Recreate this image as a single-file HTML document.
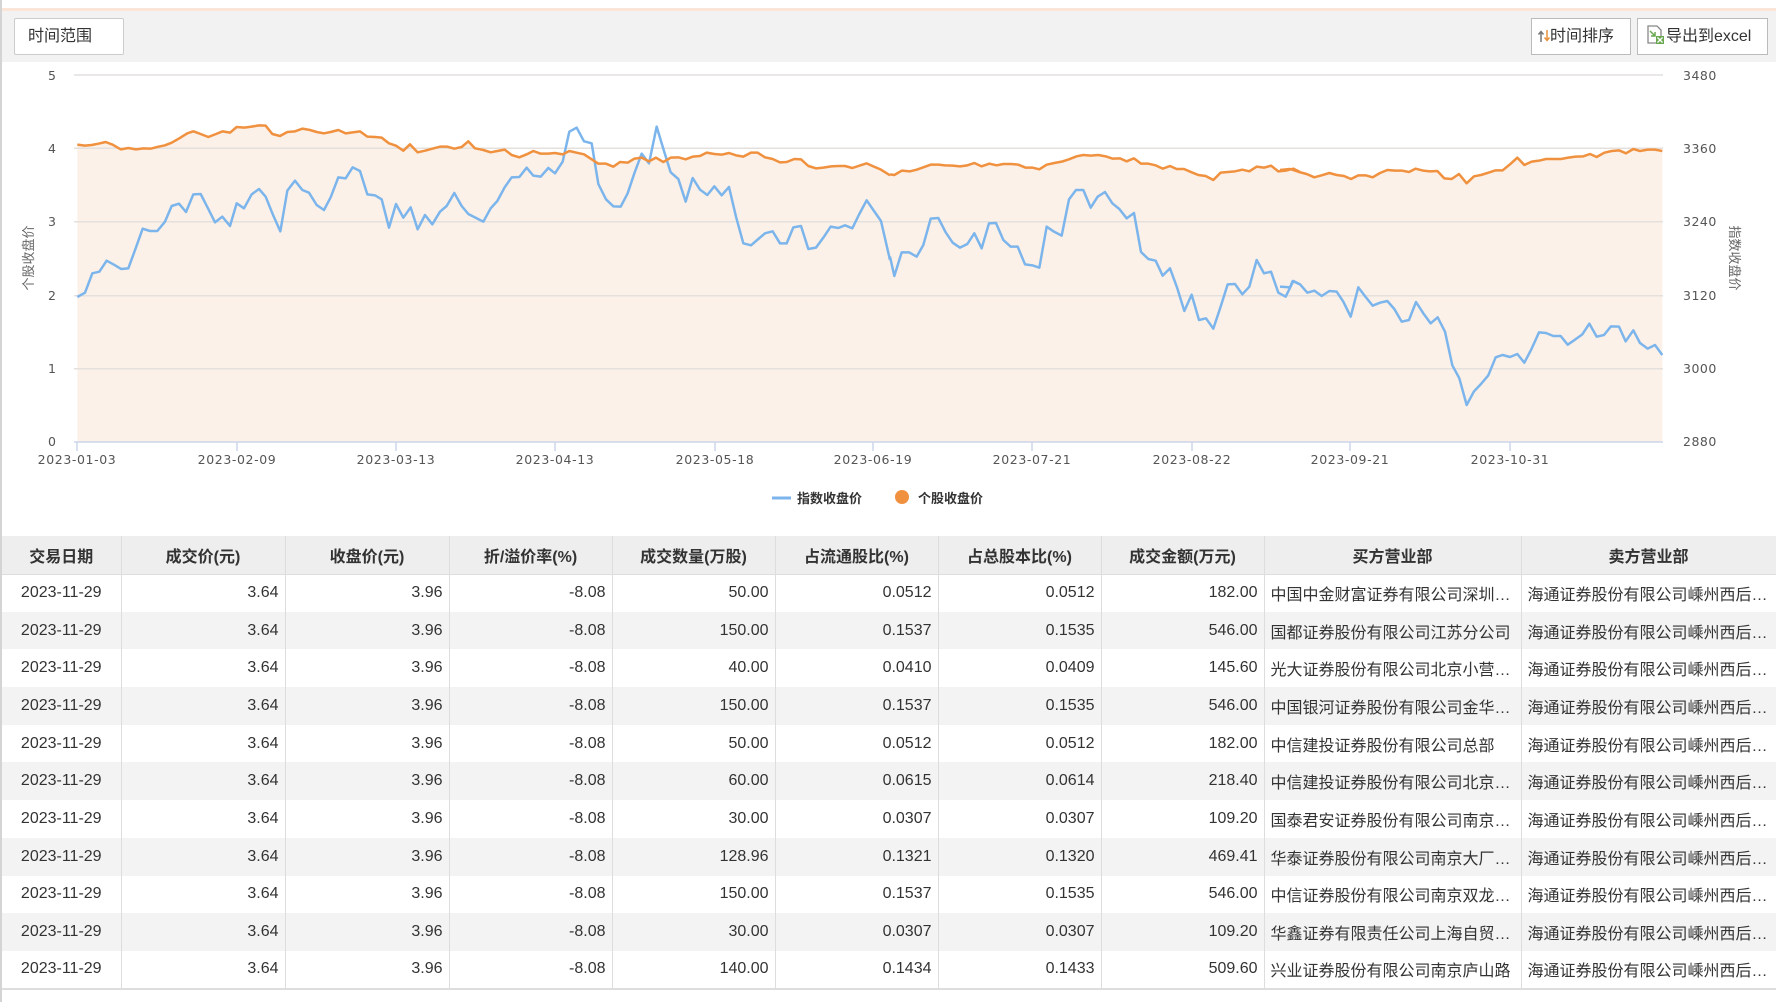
<!DOCTYPE html>
<html><head><meta charset="utf-8">
<style>
*{margin:0;padding:0;box-sizing:border-box}
body{width:1776px;height:1002px;overflow:hidden;background:#fff;font-family:"Liberation Sans","Noto Sans CJK SC",sans-serif;color:#333;position:relative}
.topline{position:absolute;left:0;top:8px;width:1776px;height:3px;background:#fbe5d6}
.toolbar{position:absolute;left:0;top:11px;width:1776px;height:51px;background:#f2f2f2}
.lb{position:absolute;left:0;top:0;width:2px;height:1002px;background:#d4d4d4}
.btn{position:absolute;top:18px;height:37px;background:#fff;border:1px solid #bbb;font-size:16px;line-height:35px;color:#333;white-space:nowrap}
table{position:absolute;left:2px;top:536px;width:1774px;border-collapse:collapse;table-layout:fixed;font-size:16px;font-family:"Liberation Sans Narrow","Liberation Sans","Noto Sans CJK SC",sans-serif}
th{height:38px;background:#eee;font-weight:bold;color:#333;border-right:1px solid #ddd;border-bottom:1px solid #ddd;text-align:center;overflow:hidden;white-space:nowrap}
td{height:37.7px;border-right:1px solid #ddd;padding:0 6px;white-space:nowrap;overflow:hidden;text-overflow:ellipsis;text-align:right}
tr:nth-child(even) td{background:#f3f3f3}
td.c{text-align:center}td.l{text-align:left}
tbody tr:last-child td{border-bottom:2px solid #ddd}
</style></head><body>
<div class="topline"></div>
<div class="toolbar"></div>
<div class="lb"></div>
<div class="btn" style="left:14px;width:110px;padding-left:13px;border-color:#ccc;border-radius:2px">时间范围</div>
<div class="btn" style="left:1531px;width:100px;padding-left:6px"><svg width="12" height="14" viewBox="0 0 12 14" style="vertical-align:-2px"><path d="M3 13V3M0.5 5.5L3 2.5L5.5 5.5" stroke="#777" stroke-width="1.5" fill="none"/><path d="M9 1v10M6.5 8.5L9 11.5L11.5 8.5" stroke="#e8913d" stroke-width="1.5" fill="none"/></svg>时间排序</div>
<div class="btn" style="left:1637px;width:131px;padding-left:8px">
<svg width="20" height="20" viewBox="0 0 20 20" style="vertical-align:-4px"><path d="M2 1h9l4 4v13H2z" fill="#fff" stroke="#888" stroke-width="1.3"/><path d="M4 6l5 5M9 7v4H5" stroke="#6aa84f" stroke-width="1.5" fill="none"/><rect x="10" y="11" width="8" height="8" fill="#6aa84f"/><path d="M11.5 12.5l5 5M16.5 12.5l-5 5" stroke="#fff" stroke-width="1.3"/></svg>导出到excel</div>

<svg style="position:absolute;left:0;top:0" width="1776" height="536" font-family="DejaVu Sans, sans-serif">
<g fill="#fcf1e8">
<g transform="translate(60,100) scale(0.33333)"><polygon points="52,1026 52,134 75,137 95,135 115,131 137,126 158,134 182,148 205,144 228,148 250,145 272,146 295,140 315,136 335,128 358,115 382,100 400,94 422,102 445,111 468,102 488,94 510,98 530,81 553,83 575,80 597,76 617,77 637,102 660,108 682,96 705,94 727,86 750,90 770,96 792,100 812,96 835,90 857,100 878,97 900,94 922,110 945,111 965,113 987,130 1008,137 1030,152 1050,133 1073,157 1095,152 1117,146 1140,140 1162,140 1183,146 1205,141 1225,124 1245,145 1260,148 1260,1026"/></g>
<g transform="translate(470,100) scale(0.33333)"><polygon points="0,1026 0,125 20,145 40,150 62,157 82,153 104,149 125,165 148,172 170,163 190,153 212,161 235,161 255,159 278,163 298,153 320,158 342,163 365,178 385,191 408,191 430,200 450,186 473,188 493,176 515,173 537,184 558,173 580,186 602,173 625,172 647,178 668,170 690,168 710,158 733,162 755,164 777,159 798,166 820,170 843,158 863,158 885,172 908,177 930,187 950,186 973,177 993,178 1015,198 1038,205 1060,203 1083,199 1105,198 1125,198 1147,204 1168,197 1190,190 1210,199 1233,209 1260,226 1260,1026"/></g>
<g transform="translate(880,100) scale(0.33333)"><polygon points="0,1026 0,205 22,222 43,225 65,212 90,214 110,209 130,202 152,194 175,194 195,196 218,197 240,199 262,196 283,189 305,199 328,191 350,196 370,192 393,192 415,194 437,203 458,203 478,208 500,194 523,189 545,185 567,178 590,169 610,165 632,167 655,165 677,169 698,176 720,175 740,184 762,175 783,191 805,191 827,196 848,206 870,198 890,207 912,207 935,217 955,225 977,228 1000,240 1022,218 1043,216 1065,214 1087,209 1108,214 1130,200 1152,203 1173,197 1195,214 1217,212 1240,206 1260,216 1260,1026"/></g>
<g transform="translate(1290,100) scale(0.33333)"><polygon points="0,1026 0,207 27,216 50,222 73,232 95,226 118,219 140,225 162,228 183,237 205,226 227,226 248,232 270,219 292,210 315,212 337,212 357,216 377,206 400,212 420,214 442,213 463,235 485,237 507,222 530,250 552,229 573,225 595,218 617,211 638,211 660,193 682,173 703,195 725,185 747,182 768,177 790,177 813,177 835,173 857,170 880,169 900,162 920,171 943,158 965,153 987,151 1008,160 1030,147 1050,153 1073,149 1095,149 1117,153 1117,1026"/></g>
</g>
<g stroke="#e3e0dd" stroke-width="1.5">
<line x1="74" y1="75" x2="1663" y2="75"/><line x1="74" y1="148.3" x2="1663" y2="148.3"/><line x1="74" y1="221.7" x2="1663" y2="221.7"/><line x1="74" y1="295.7" x2="1663" y2="295.7"/><line x1="74" y1="368.7" x2="1663" y2="368.7"/>
</g>
<g stroke="#ccd6eb" stroke-width="1.5"><line x1="74" y1="442" x2="1663" y2="442"/>
<line x1="77" y1="442" x2="77" y2="451"/><line x1="237" y1="442" x2="237" y2="451"/><line x1="396" y1="442" x2="396" y2="451"/><line x1="555" y1="442" x2="555" y2="451"/><line x1="715" y1="442" x2="715" y2="451"/><line x1="873" y1="442" x2="873" y2="451"/><line x1="1032" y1="442" x2="1032" y2="451"/><line x1="1192" y1="442" x2="1192" y2="451"/><line x1="1350" y1="442" x2="1350" y2="451"/><line x1="1510" y1="442" x2="1510" y2="451"/></g>
<g fill="none" stroke="#7cb5ec" stroke-width="7.5" stroke-linejoin="round">
<polyline transform="translate(60,100) scale(0.33333)" points="52,591 75,578 97,520 118,515 140,482 162,494 183,507 205,505 227,445 248,386 270,393 292,393 315,365 335,318 357,311 378,336 400,283 422,282 443,323 465,367 487,350 510,378 530,310 552,325 575,283 597,267 617,290 640,347 661,394 682,272 705,242 727,270 747,278 770,315 792,330 812,292 835,232 857,235 878,202 900,213 922,283 945,286 965,298 987,383 1008,312 1030,353 1052,322 1073,388 1095,345 1117,373 1140,335 1160,318 1183,279 1205,318 1225,342 1260,360"/>
<polyline transform="translate(470,100) scale(0.33333)" points="30,360 40,365 62,325 82,303 104,262 125,232 148,231 170,203 190,227 212,230 235,204 255,220 278,185 298,95 320,83 342,124 365,130 385,252 408,298 430,319 452,320 473,280 493,220 515,161 537,190 560,80 582,153 602,217 625,237 647,305 668,234 690,269 712,285 733,259 755,286 777,261 798,350 820,430 843,436 865,417 885,400 908,394 930,430 950,430 970,382 993,378 1015,447 1038,443 1060,413 1082,380 1105,384 1125,376 1147,385 1168,342 1190,301 1212,333 1233,363 1260,480"/>
<polyline transform="translate(880,100) scale(0.33333)" points="30,470 43,528 65,457 87,457 110,470 130,435 152,356 175,354 197,397 218,428 240,443 262,432 283,400 305,445 327,370 348,369 370,420 392,440 413,440 435,493 457,496 478,503 500,380 522,395 545,407 567,298 588,270 610,270 632,323 653,290 675,276 697,310 718,327 740,355 762,339 783,456 805,477 827,482 848,527 870,505 892,565 913,633 935,584 957,660 978,655 1000,686 1022,620 1043,553 1065,552 1087,583 1108,560 1130,480 1152,520 1173,515 1195,578 1217,590 1240,543 1260,553"/>
<polyline transform="translate(1290,100) scale(0.33333)" points="-30,560 0,562 8,543 30,553 52,578 73,572 95,588 118,573 140,575 160,605 182,650 205,562 227,591 248,617 270,608 292,603 313,627 335,665 357,660 378,606 400,640 422,670 443,652 465,695 487,796 508,835 530,915 552,874 573,852 595,826 617,772 638,765 660,771 682,762 703,788 725,746 747,697 768,699 790,708 812,708 833,734 855,719 877,703 898,671 920,710 942,705 963,679 987,680 1007,724 1030,691 1050,729 1073,746 1095,735 1117,765"/>
</g>
<g fill="none" stroke="#f0913f" stroke-width="7.5" stroke-linejoin="round">
<polyline transform="translate(60,100) scale(0.33333)" points="52,134 75,137 95,135 115,131 137,126 158,134 182,148 205,144 228,148 250,145 272,146 295,140 315,136 335,128 358,115 382,100 400,94 422,102 445,111 468,102 488,94 510,98 530,81 553,83 575,80 597,76 617,77 637,102 660,108 682,96 705,94 727,86 750,90 770,96 792,100 812,96 835,90 857,100 878,97 900,94 922,110 945,111 965,113 987,130 1008,137 1030,152 1050,133 1073,157 1095,152 1117,146 1140,140 1162,140 1183,146 1205,141 1225,124 1245,145 1260,148"/>
<polyline transform="translate(470,100) scale(0.33333)" points="30,148 40,150 62,157 82,153 104,149 125,165 148,172 170,163 190,153 212,161 235,161 255,159 278,163 298,153 320,158 342,163 365,178 385,191 408,191 430,200 450,186 473,188 493,176 515,173 537,184 558,173 580,186 602,173 625,172 647,178 668,170 690,168 710,158 733,162 755,164 777,159 798,166 820,170 843,158 863,158 885,172 908,177 930,187 950,186 973,177 993,178 1015,198 1038,205 1060,203 1083,199 1105,198 1125,198 1147,204 1168,197 1190,190 1210,199 1233,209 1260,226"/>
<polyline transform="translate(880,100) scale(0.33333)" points="30,223 43,225 65,212 90,214 110,209 130,202 152,194 175,194 195,196 218,197 240,199 262,196 283,189 305,199 328,191 350,196 370,192 393,192 415,194 437,203 458,203 478,208 500,194 523,189 545,185 567,178 590,169 610,165 632,167 655,165 677,169 698,176 720,175 740,184 762,175 783,191 805,191 827,196 848,206 870,198 890,207 912,207 935,217 955,225 977,228 1000,240 1022,218 1043,216 1065,214 1087,209 1108,214 1130,200 1152,203 1173,197 1195,214 1217,212 1240,206 1260,216"/>
<polyline transform="translate(1290,100) scale(0.33333)" points="-30,210 0,207 27,216 50,222 73,232 95,226 118,219 140,225 162,228 183,237 205,226 227,226 248,232 270,219 292,210 315,212 337,212 357,216 377,206 400,212 420,214 442,213 463,235 485,237 507,222 530,250 552,229 573,225 595,218 617,211 638,211 660,193 682,173 703,195 725,185 747,182 768,177 790,177 813,177 835,173 857,170 880,169 900,162 920,171 943,158 965,153 987,151 1008,160 1030,147 1050,153 1073,149 1095,149 1117,153"/>
</g>
<g font-size="12.5" fill="#555" text-anchor="end">
<text x="56" y="80">5</text><text x="56" y="153">4</text><text x="56" y="226">3</text><text x="56" y="300">2</text><text x="56" y="373">1</text><text x="56" y="446">0</text>
</g>
<g font-size="12.5" fill="#555" letter-spacing="0.5">
<text x="1683" y="80">3480</text><text x="1683" y="153">3360</text><text x="1683" y="226">3240</text><text x="1683" y="300">3120</text><text x="1683" y="373">3000</text><text x="1683" y="446">2880</text>
</g>
<g font-size="12.5" fill="#555" text-anchor="middle" letter-spacing="0.6">
<text x="77" y="464">2023-01-03</text><text x="237" y="464">2023-02-09</text><text x="396" y="464">2023-03-13</text><text x="555" y="464">2023-04-13</text><text x="715" y="464">2023-05-18</text><text x="873" y="464">2023-06-19</text><text x="1032" y="464">2023-07-21</text><text x="1192" y="464">2023-08-22</text><text x="1350" y="464">2023-09-21</text><text x="1510" y="464">2023-10-31</text>
</g>
<text transform="translate(33,258) rotate(-90)" font-size="13" fill="#666" text-anchor="middle" font-family="Noto Sans CJK SC, sans-serif">个股收盘价</text>
<text transform="translate(1730,258) rotate(90)" font-size="13" fill="#666" text-anchor="middle" font-family="Noto Sans CJK SC, sans-serif">指数收盘价</text>
<line x1="772" y1="498" x2="791" y2="498" stroke="#7cb5ec" stroke-width="3"/>
<text x="797" y="503" font-size="13" font-weight="bold" fill="#333" font-family="Noto Sans CJK SC, sans-serif">指数收盘价</text>
<circle cx="902" cy="497" r="7" fill="#f0913f"/>
<text x="918" y="503" font-size="13" font-weight="bold" fill="#333" font-family="Noto Sans CJK SC, sans-serif">个股收盘价</text>
</svg>

<table>
<colgroup><col style="width:119px"><col style="width:164px"><col style="width:164px"><col style="width:163px"><col style="width:163px"><col style="width:163px"><col style="width:163px"><col style="width:163px"><col style="width:257px"><col style="width:255px"></colgroup>
<thead><tr><th>交易日期</th><th>成交价(元)</th><th>收盘价(元)</th><th>折/溢价率(%)</th><th>成交数量(万股)</th><th>占流通股比(%)</th><th>占总股本比(%)</th><th>成交金额(万元)</th><th>买方营业部</th><th>卖方营业部</th></tr></thead>
<tbody>
<tr><td class="c">2023-11-29</td><td>3.64</td><td>3.96</td><td>-8.08</td><td>50.00</td><td>0.0512</td><td>0.0512</td><td>182.00</td><td class="l">中国中金财富证券有限公司深圳分公司</td><td class="l">海通证券股份有限公司嵊州西后街证券营业部</td></tr>
<tr><td class="c">2023-11-29</td><td>3.64</td><td>3.96</td><td>-8.08</td><td>150.00</td><td>0.1537</td><td>0.1535</td><td>546.00</td><td class="l">国都证券股份有限公司江苏分公司</td><td class="l">海通证券股份有限公司嵊州西后街证券营业部</td></tr>
<tr><td class="c">2023-11-29</td><td>3.64</td><td>3.96</td><td>-8.08</td><td>40.00</td><td>0.0410</td><td>0.0409</td><td>145.60</td><td class="l">光大证券股份有限公司北京小营证券</td><td class="l">海通证券股份有限公司嵊州西后街证券营业部</td></tr>
<tr><td class="c">2023-11-29</td><td>3.64</td><td>3.96</td><td>-8.08</td><td>150.00</td><td>0.1537</td><td>0.1535</td><td>546.00</td><td class="l">中国银河证券股份有限公司金华分公司</td><td class="l">海通证券股份有限公司嵊州西后街证券营业部</td></tr>
<tr><td class="c">2023-11-29</td><td>3.64</td><td>3.96</td><td>-8.08</td><td>50.00</td><td>0.0512</td><td>0.0512</td><td>182.00</td><td class="l">中信建投证券股份有限公司总部</td><td class="l">海通证券股份有限公司嵊州西后街证券营业部</td></tr>
<tr><td class="c">2023-11-29</td><td>3.64</td><td>3.96</td><td>-8.08</td><td>60.00</td><td>0.0615</td><td>0.0614</td><td>218.40</td><td class="l">中信建投证券股份有限公司北京分公司</td><td class="l">海通证券股份有限公司嵊州西后街证券营业部</td></tr>
<tr><td class="c">2023-11-29</td><td>3.64</td><td>3.96</td><td>-8.08</td><td>30.00</td><td>0.0307</td><td>0.0307</td><td>109.20</td><td class="l">国泰君安证券股份有限公司南京证券</td><td class="l">海通证券股份有限公司嵊州西后街证券营业部</td></tr>
<tr><td class="c">2023-11-29</td><td>3.64</td><td>3.96</td><td>-8.08</td><td>128.96</td><td>0.1321</td><td>0.1320</td><td>469.41</td><td class="l">华泰证券股份有限公司南京大厂证券</td><td class="l">海通证券股份有限公司嵊州西后街证券营业部</td></tr>
<tr><td class="c">2023-11-29</td><td>3.64</td><td>3.96</td><td>-8.08</td><td>150.00</td><td>0.1537</td><td>0.1535</td><td>546.00</td><td class="l">中信证券股份有限公司南京双龙大道</td><td class="l">海通证券股份有限公司嵊州西后街证券营业部</td></tr>
<tr><td class="c">2023-11-29</td><td>3.64</td><td>3.96</td><td>-8.08</td><td>30.00</td><td>0.0307</td><td>0.0307</td><td>109.20</td><td class="l">华鑫证券有限责任公司上海自贸试验区</td><td class="l">海通证券股份有限公司嵊州西后街证券营业部</td></tr>
<tr><td class="c">2023-11-29</td><td>3.64</td><td>3.96</td><td>-8.08</td><td>140.00</td><td>0.1434</td><td>0.1433</td><td>509.60</td><td class="l">兴业证券股份有限公司南京庐山路</td><td class="l">海通证券股份有限公司嵊州西后街证券营业部</td></tr>
</tbody></table>
</body></html>
